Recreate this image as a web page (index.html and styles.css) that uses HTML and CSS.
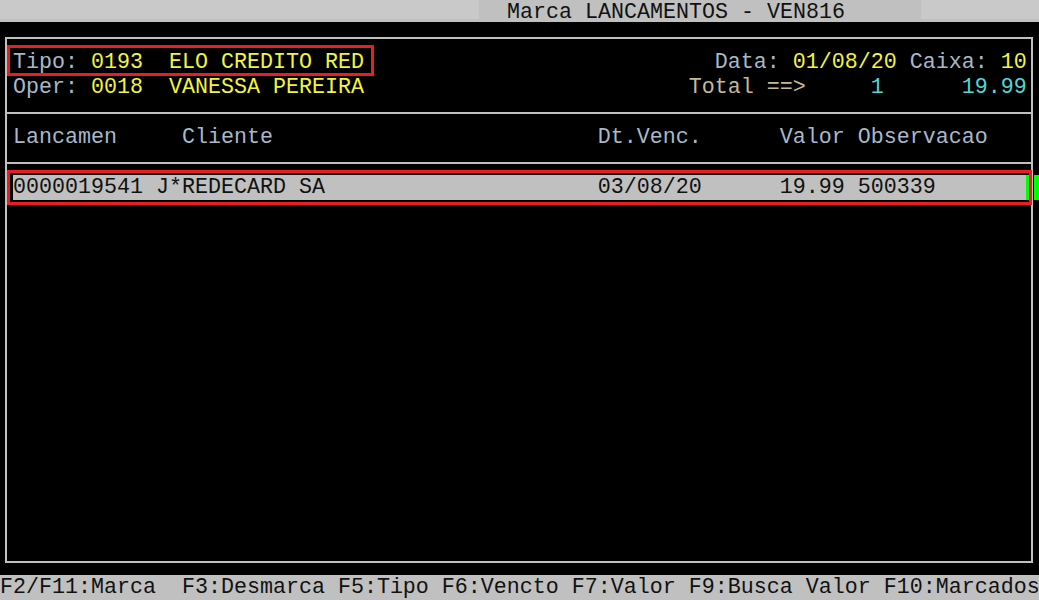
FILE: index.html
```html
<!DOCTYPE html>
<html lang="pt">
<head>
  <meta charset="UTF-8">
  <title>Marca LANCAMENTOS - VEN816</title>
  <link rel="stylesheet" href="styles.css">
</head>
<body>

<div class="screen">
  <div class="titlebar">
    <div class="tb-pad"></div>
    <div class="tb-title">Marca LANCAMENTOS - VEN816</div>
    <div class="tb-pad tb-right"></div>
  </div>

  <div class="frame">
    <div class="line"><span class="lbl">Tipo:</span> <span class="val">0193</span>  <span class="val">ELO CREDITO RED</span>                           <span class="lbl">Data:</span> <span class="val">01/08/20</span> <span class="lbl">Caixa:</span> <span class="val">10</span></div>
    <div class="line"><span class="lbl">Oper:</span> <span class="val">0018</span>  <span class="val">VANESSA PEREIRA</span>                         <span class="tot">Total ==></span>     <span class="num">1</span>      <span class="num">19.99</span></div>
    <div class="sep"></div>
    <div class="line lbl">Lancamen     Cliente                         Dt.Venc.      Valor Observacao</div>
    <div class="sep"></div>
    <div class="line sel"><span class="cells">0000019541 J*REDECARD SA                     03/08/20      19.99 500339</span><span class="bar"></span></div>
  </div>

  <div class="keys">F2/F11:Marca  F3:Desmarca F5:Tipo F6:Vencto F7:Valor F9:Busca Valor F10:Marcados</div>

  <!-- marcas de destaque por cima da tela -->
  <div class="mark mark-tipo"></div>
  <div class="mark mark-row"></div>
  <div class="cursor"></div>
</div>

</body>
</html>
```

FILE: styles.css
```css
body{
  margin: 0;
  background: #000;
}
.screen{
  position: relative;
  width: 1039px;
  height: 600px;
  overflow: hidden;
  font-family: "Liberation Mono", "DejaVu Sans Mono", monospace;
  font-size: 21.667px;
  line-height: 25px;
  color: #c0c0c0;
}
.titlebar{
  display: flex;
  height: 25px;
  background: linear-gradient(#c0c0c0, #c0c0c0) top left / 100% 22px no-repeat;
  color: #111;
}
  .tb-pad{
    flex: none;
    width: 479px;
    height: 19px;
    background: #c9c9c9;
  }
  .tb-title{
    flex: 1;
    padding-left: 28px;
    white-space: pre;
  }
  .tb-right{
    width: 118px;
  }

.frame{
  box-sizing: border-box;
  width: 1028px;
  height: 526px;
  margin: 12px 0 0 5px;
  padding-top: 11px;
  border: 2px solid #c0c0c0;
}
  .line{
    height: 25px;
    padding-left: 6px;
    white-space: pre;
  }
  .sep{
    height: 2px;
    margin: 12px 0 11px;
    background: #c0c0c0;
  }
  .lbl{
    color: #a9b8c8;
  }
  .val{
    color: #f4f43c;
  }
  .tot{
    color: #c9b896;
  }
  .num{
    color: #52d6d6;
  }
  .sel{
    display: flex;
    width: 1016px;
    margin-left: 6px;
    padding-left: 0;
    background: #c0c0c0;
    color: #111;
  }
  .bar{
    width: 3px;
    margin-left: auto;
    background: #00ff00;
  }

.keys{
  height: 25px;
  margin-top: 12px;
  background: #c0c0c0;
  color: #111;
  white-space: pre;
}

.mark{
  position: absolute;
  box-sizing: border-box;
  border: 3px solid #ec1c24;
}
.mark-tipo{
  left: 7px;
  top: 45px;
  width: 367px;
  height: 31px;
}
.mark-row{
  left: 7px;
  top: 170px;
  width: 1025px;
  height: 35px;
}
.cursor{
  position: absolute;
  left: 1034px;
  top: 175px;
  width: 5px;
  height: 25px;
  background: #00ff00;
}
```
